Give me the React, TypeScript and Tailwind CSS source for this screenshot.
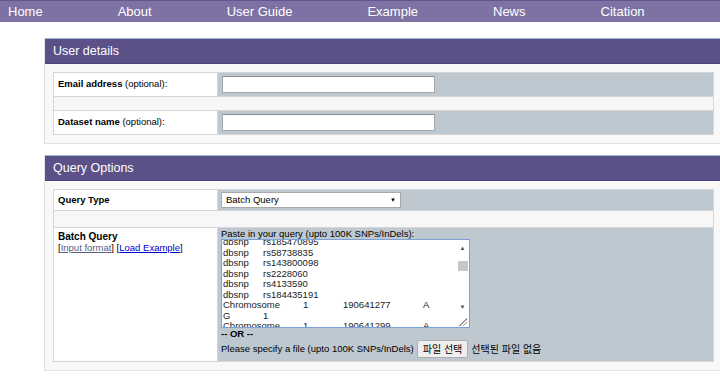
import type { ReactNode } from "react";

const navItems = ["Home", "About", "User Guide", "Example", "News", "Citation"];

const queryLines = [
  "dbsnp\trs185470895",
  "dbsnp\trs58738835",
  "dbsnp\trs143800098",
  "dbsnp\trs2228060",
  "dbsnp\trs4133590",
  "dbsnp\trs184435191",
  "Chromosome\t1\t190641277\tA",
  "G\t1",
  "Chromosome\t1\t190641299\tA",
];

function Panel({ title, children }: { title: string; children: ReactNode }) {
  return (
    <section className="ml-[44px] border-b border-l border-[#e2e2e2] bg-[#f8f8f8] pb-2">
      <div className="flex h-[26px] items-center border-t border-b border-t-[#9fb3d6] border-b-[#4c4280] bg-[#5c5089] pl-2 text-[12.5px] text-white">
        {title}
      </div>
      <div className="ml-2 mr-[6px] mt-2 border border-[#d6d6d6]">{children}</div>
    </section>
  );
}

function Row({ label, children, className = "" }: { label: ReactNode; children: ReactNode; className?: string }) {
  return (
    <div className={`grid grid-cols-[164px_1fr] ${className}`}>
      <div className="flex items-center border-r border-[#d6d6d6] bg-white px-[4px] text-[9.5px] text-black">
        <span>{label}</span>
      </div>
      <div className="flex items-center bg-[#bec8d1] px-1">{children}</div>
    </div>
  );
}

function Spacer({ h }: { h: string }) {
  return <div className={`${h} border-y border-[#d6d6d6] bg-[#f7f7f7]`} />;
}

function TextInput() {
  return <div className="h-[17px] w-[213px] border border-[#a9a9a9] border-t-[#8e8e8e] bg-white" />;
}

export default function App() {
  return (
    <div className="min-h-[379px] overflow-hidden bg-white font-['Liberation_Sans','Noto_Sans_CJK_KR',Arial,sans-serif]">
      <nav className="flex h-[22px] items-center gap-[75px] border-t border-[#62568f] bg-[#7e72a5] pl-2 text-[13px] text-white">
        {navItems.map((item) => (
          <span key={item}>{item}</span>
        ))}
      </nav>

      <div className="mt-[16px]">
        <Panel title="User details">
          <Row label={<><b>Email address</b> (optional):</>} className="h-[23px]">
            <TextInput />
          </Row>
          <Spacer h="h-[15px]" />
          <Row label={<><b>Dataset name</b> (optional):</>} className="h-[23px]">
            <TextInput />
          </Row>
        </Panel>
      </div>

      <div className="mt-[11px]">
        <Panel title="Query Options">
          <Row label={<b>Query Type</b>} className="h-[20px]">
            <div className="-ml-[1px] flex h-[16px] w-[180px] items-center justify-between border border-[#a9a9a9] bg-white px-1 text-[9.5px] text-black">
              <span>Batch Query</span>
              <span className="text-[6px]">▼</span>
            </div>
          </Row>
          <Spacer h="h-[18px]" />
          <div className="grid h-[133px] grid-cols-[164px_1fr]">
            <div className="border-r border-[#d6d6d6] bg-white px-[4px] pt-[3px] text-[9.5px] leading-[11px] text-black">
              <b className="text-[10px]">Batch Query</b>
              <div>
                [<span className="text-[#5c5c7c] underline">Input format</span>] [
                <span className="text-[#0000cc] underline">Load Example</span>]
              </div>
            </div>
            <div className="bg-[#bec8d1] px-[3px] text-[9.5px] text-black">
              <div className="leading-[11px]">Paste in your query (upto 100K SNPs/InDels):</div>
              <div className="flex h-[89px] w-[249px] border border-[#7da2d8] bg-white">
                <div className="flex-1 overflow-hidden pl-[1px]">
                  <div className="-mt-[3px] whitespace-pre text-[9.5px] leading-[10.5px] text-[#222] [tab-size:40px]">
                    {queryLines.map((line, i) => (
                      <div key={i}>{line}</div>
                    ))}
                  </div>
                </div>
                <div className="flex w-[13px] flex-col items-center bg-white text-[#505050]">
                  <span className="mt-[3px] text-[6px] leading-[10px]">▲</span>
                  <div className="mt-[8px] h-[10px] w-[10px] bg-[#c8c8c8]" />
                  <div className="flex-1" />
                  <span className="text-[6px] leading-[10px]">▼</span>
                  <div className="mb-[1px] mt-[5px] h-[9px] w-[9px] bg-[linear-gradient(135deg,transparent_55%,#999_55%,#999_62%,transparent_62%,transparent_75%,#999_75%,#999_82%,transparent_82%)]" />
                </div>
              </div>
              <div className="font-bold leading-[11px]">-- OR --</div>
              <div className="mt-[1px] flex items-center gap-[3px]">
                <span>Please specify a file (upto 100K SNPs/InDels)</span>
                <span className="flex h-[18px] items-center rounded-[2px] border border-[#adadad] bg-[#efefef] px-[5px] text-[10px]">
                  파일 선택
                </span>
                <span className="text-[10px]">선택된 파일 없음</span>
              </div>
            </div>
          </div>
        </Panel>
      </div>
    </div>
  );
}
